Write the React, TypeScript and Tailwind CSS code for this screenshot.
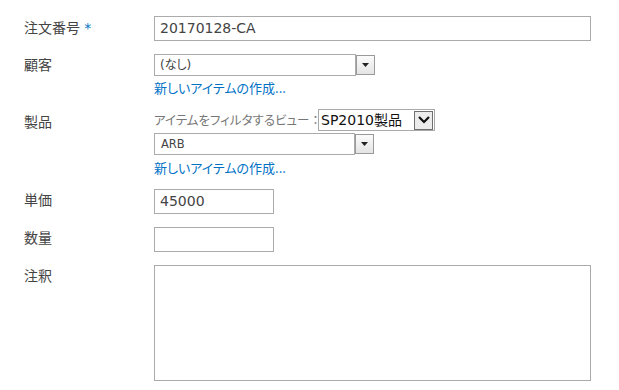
import React from "react";

const jp = { fontFamily: '"Noto Sans CJK JP", sans-serif' } as React.CSSProperties;
const mixed = { fontFamily: '"DejaVu Sans", "Noto Sans CJK JP", sans-serif' } as React.CSSProperties;

function DropBtn() {
  return (
    <div className="w-[19px] h-[20px] mt-[1px] border border-[#9a9a9a] bg-gradient-to-b from-[#fbfbfb] to-[#e4e4e4] flex items-center justify-center">
      <svg width="7" height="4" viewBox="0 0 7 4">
        <polygon points="0,0 7,0 3.5,4" fill="#222" />
      </svg>
    </div>
  );
}

function Label({ children, pt }: { children: React.ReactNode; pt: string }) {
  return (
    <div className={`w-[154px] shrink-0 pl-[24px] text-[14px] leading-[20px] text-[#444] ${pt}`} style={jp}>
      {children}
    </div>
  );
}

function NewLink({ className }: { className: string }) {
  return (
    <div
      className={`text-[13px] leading-[18px] text-[#0072c6] ${className}`}
      style={{ ...jp, fontFeatureSettings: '"palt"' }}
    >
      新しいアイテムの作成...
    </div>
  );
}

export default function App() {
  return (
    <div className="w-[619px] h-[390px] bg-white overflow-hidden pt-[16px]">
      {/* 注文番号 */}
      <div className="flex">
        <Label pt="pt-[1px]">
          注文番号 <span className="text-[#0072c6] ml-[1px]" style={mixed}>*</span>
        </Label>
        <div
          className="w-[437px] h-[25px] border border-[#ababab] px-[5px] text-[14px] leading-[23px] text-[#444]"
          style={mixed}
        >
          20170128-CA
        </div>
      </div>

      {/* 顧客 */}
      <div className="flex mt-[13px]">
        <Label pt="pt-[0px]">顧客</Label>
        <div className="flex flex-col">
          <div className="flex items-start">
            <div
              className="w-[202px] h-[22px] border border-[#ababab] px-[5px] text-[12px] leading-[20px] text-[#444]"
              style={{ ...mixed, fontFeatureSettings: '"palt"' }}
            >
              (なし)
            </div>
            <DropBtn />
          </div>
          <NewLink className="mt-[3px]" />
        </div>
      </div>

      {/* 製品 */}
      <div className="flex mt-[12px]">
        <Label pt="pt-[2px]">製品</Label>
        <div className="flex flex-col">
          <div className="flex items-center">
            <div
              className="text-[12.5px] leading-[22px] text-[#777] w-[164px] shrink-0 whitespace-nowrap"
              style={jp}
            >
              <span style={{ fontFeatureSettings: '"palt"' }}>アイテムをフィルタするビュー</span>
              <span>：</span>
            </div>
            <div className="w-[117px] h-[22px] shrink-0 border border-[#a9a9a9] flex items-center justify-between pl-[2px] pr-[1px]">
              <span className="text-[14px] leading-[20px] text-[#111] whitespace-nowrap" style={mixed}>
                SP2010製品
              </span>
              <div className="w-[19px] h-[19px] border border-[#6f6f6f] bg-[#ececec] flex items-center justify-center">
                <svg width="12" height="8" viewBox="0 0 12 8">
                  <polyline points="1,1 6,6 11,1" fill="none" stroke="#111" strokeWidth="2.2" />
                </svg>
              </div>
            </div>
          </div>
          <div className="flex items-start mt-[2px]">
            <div
              className="w-[201px] h-[22px] border border-[#ababab] px-[6px] text-[11.5px] leading-[20px] text-[#444]"
              style={mixed}
            >
              ARB
            </div>
            <DropBtn />
          </div>
          <NewLink className="mt-[4px]" />
        </div>
      </div>

      {/* 単価 */}
      <div className="flex mt-[12px]">
        <Label pt="pt-[0px]">単価</Label>
        <div
          className="w-[120px] h-[25px] border border-[#ababab] px-[5px] text-[14px] leading-[23px] text-[#444]"
          style={mixed}
        >
          45000
        </div>
      </div>

      {/* 数量 */}
      <div className="flex mt-[13px]">
        <Label pt="pt-[0px]">数量</Label>
        <div className="w-[120px] h-[25px] border border-[#ababab]" />
      </div>

      {/* 注釈 */}
      <div className="flex mt-[13px]">
        <Label pt="pt-[0px]">注釈</Label>
        <div className="w-[437px] h-[116px] border border-[#ababab]" />
      </div>
    </div>
  );
}
